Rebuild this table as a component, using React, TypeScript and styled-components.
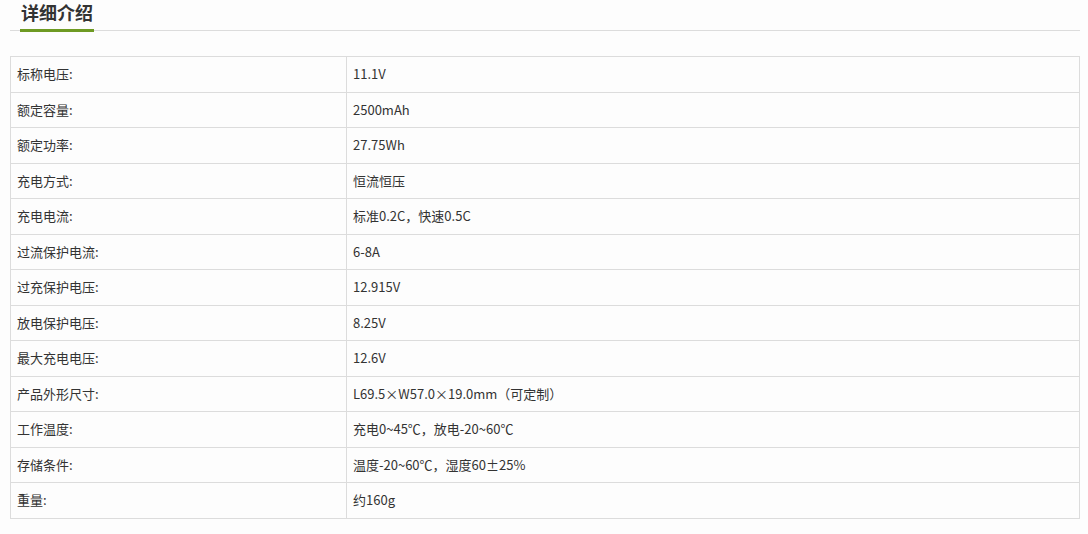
import styled, { createGlobalStyle } from "styled-components";

const rows: [string, string][] = [
  ["标称电压:", "11.1V"],
  ["额定容量:", "2500mAh"],
  ["额定功率:", "27.75Wh"],
  ["充电方式:", "恒流恒压"],
  ["充电电流:", "标准0.2C，快速0.5C"],
  ["过流保护电流:", "6-8A"],
  ["过充保护电压:", "12.915V"],
  ["放电保护电压:", "8.25V"],
  ["最大充电电压:", "12.6V"],
  ["产品外形尺寸:", "L69.5×W57.0×19.0mm（可定制）"],
  ["工作温度:", "充电0~45℃，放电-20~60℃"],
  ["存储条件:", "温度-20~60℃，湿度60±25%"],
  ["重量:", "约160g"],
];

export default function App() {
  return (
    <>
      <GlobalStyle />
      <Page>
        <Header>
          <Title>详细介绍</Title>
        </Header>
        <SpecTable>
          <colgroup>
            <col style={{ width: 336 }} />
            <col />
          </colgroup>
          <tbody>
            {rows.map(([label, value]) => (
              <Row key={label}>
                <Cell>{label}</Cell>
                <Cell>{value}</Cell>
              </Row>
            ))}
          </tbody>
        </SpecTable>
      </Page>
    </>
  );
}

const GlobalStyle = createGlobalStyle`
  html, body {
    margin: 0;
    padding: 0;
    background: #fdfdfd;
  }
  body {
    font-family: "Noto Sans CJK SC", "Noto Sans", sans-serif;
    color: #333;
  }
`;

const Page = styled.div`
  width: 1088px;
  height: 534px;
  padding: 0 8px 0 10px;
  box-sizing: border-box;
  display: flex;
  flex-direction: column;
`;

const Header = styled.div`
  height: 30px;
  border-bottom: 1px solid #dcdcdc;
  padding-left: 10px;
  display: flex;
  align-items: flex-end;
`;

const Title = styled.h2`
  margin: 0 0 -2px;
  font-size: 18px;
  font-weight: bold;
  color: #333;
  line-height: 22px;
  padding: 0 1px 6px;
  border-bottom: 3px solid #6e9a23;
`;

const SpecTable = styled.table`
  margin-top: 25px;
  width: 1070px;
  border-collapse: collapse;
  table-layout: fixed;
  font-size: 13px;
  color: #333;
`;

const Row = styled.tr`
  height: 35.5px;
`;

const Cell = styled.td`
  border: 1px solid #dcdcdc;
  padding: 0 6px;
  vertical-align: middle;
  line-height: 18px;
`;
